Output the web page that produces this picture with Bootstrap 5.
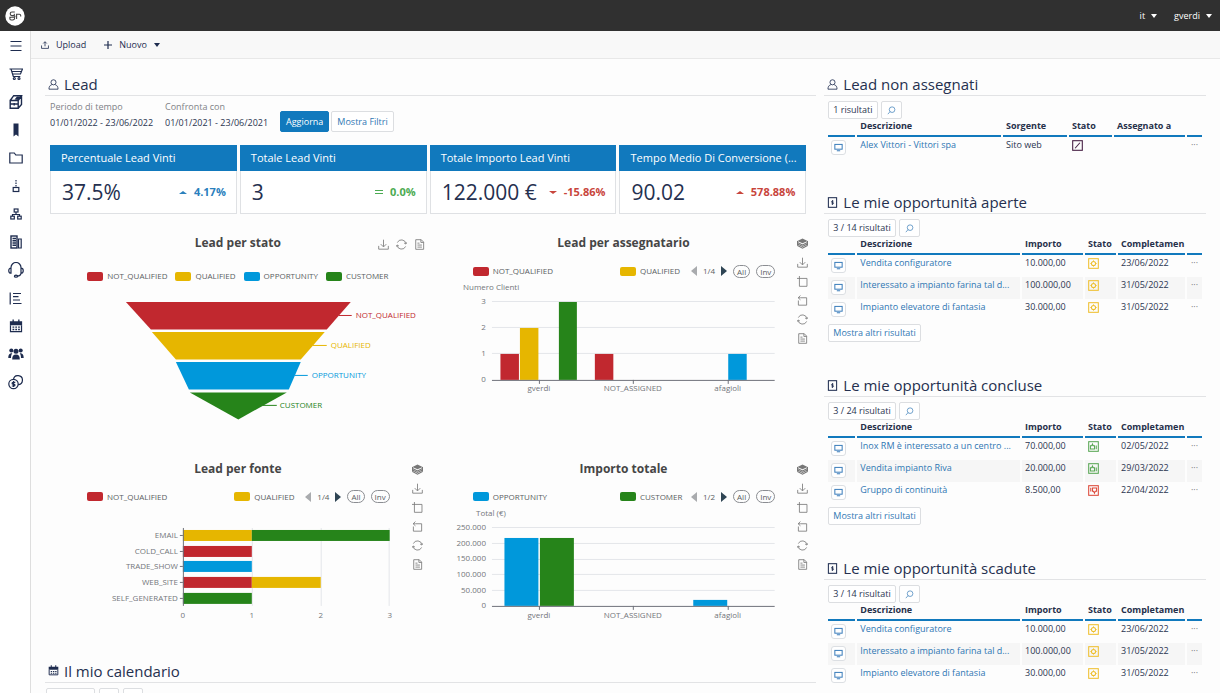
<!DOCTYPE html>
<html lang="it">
<head>
<meta charset="utf-8">
<meta name="viewport" content="width=device-width, initial-scale=1">
<title>Dashboard CRM</title>
<link href="https://cdn.jsdelivr.net/npm/bootstrap@5.3.0/dist/css/bootstrap.min.css" rel="stylesheet">
<style>
:root{--navy:#1e2c4f;--brand:#1179bd;--line:#e2e3e5;--red:#c1282f;--yellow:#e6b600;--blue:#0098db;--green:#26841a}
body{font-family:"Open Sans","Noto Sans",sans-serif;font-size:9px;line-height:14px;color:#2b3550;background:#fdfdfd}
.shell{scrollbar-width:none}
.shell::-webkit-scrollbar{display:none}
svg{display:block;flex:none}
.ic{fill:none;stroke:currentColor;stroke-width:1.2}
.ic .f,.f{fill:currentColor;stroke:none}
.topbar{background:#303030;height:31px;padding:0 8px 0 5px}
.topbar button,.actions button{background:none;border:0;padding:0;line-height:14px;display:flex;align-items:center}
.topbar button{color:#fff;gap:6px}
.topbar .users{gap:17px}
.tri{width:0;height:0;border:3px solid transparent;border-top:4px solid currentColor;border-bottom:0}
.tri.up{border:4px solid transparent;border-bottom:3px solid currentColor;border-top:0}
.tri.down{border:4px solid transparent;border-top:3px solid currentColor;border-bottom:0}
.rail{width:31px;border-right:1px solid #dedede;background:#fff;color:var(--navy);padding:1px 0 0 1px}
.rail a{height:28px;color:inherit;display:flex;align-items:center;justify-content:center}
.actions{height:28px;background:#f8f8f8;border-bottom:1px solid #e8e8e8;padding:0 10px;gap:18px}
.actions button{color:var(--navy);gap:7px}
.board{padding:15px 14px 0}
.sec-title{font-size:15px;line-height:20px;font-weight:400;color:#25304f;border-bottom:1px solid var(--line);margin:0;padding:0 0 1px 3px;gap:5px}
.sec-title svg{width:11px;height:11px;color:var(--navy)}
.section+.section{margin-top:33px}
.calendar{margin-top:34px}
.filters{gap:8px;padding:5px 5px 0;margin-bottom:13px}
.fld{width:107px;padding-bottom:2px}
.fld label{line-height:12px;color:#808287;display:block;margin-bottom:3px}
.fld input{border:0;background:none;padding:0;width:100%;height:14px;line-height:14px;color:#2b3550;display:block}
.filters .btn{height:21px;padding:0 5px;font-size:9px;line-height:17px;border-radius:2px}
.btn-brand,.btn-brand:hover{background:var(--brand);border-color:var(--brand);color:#fff}
.btn-soft,.btn-soft:hover{background:#fff;border:1px solid #dcdee1;color:#3178b4}
.filters .pair{gap:2px}
.kpis{display:grid;grid-template-columns:repeat(4,minmax(0,1fr));gap:3px;margin:0 10px 17px 5px}
.kpis .card{border:1px solid #dfe1e4;border-radius:0;background:#fff}
.kpis .card-header{background:var(--brand);color:#fff;font-size:11px;line-height:16px;padding:5px 4px 5px 11px;border:0;border-radius:0;margin:-1px -1px 0}
.kpis .card-body{padding:0 10px 0 11px;height:42px}
.kpi-num{font-size:21px;line-height:28px;color:#25304f}
.kpi-delta{font-size:11px;font-weight:700;gap:7px}
.t-blue{color:#2a80bd}.t-green{color:#4cab52}.t-red{color:#c8453c}
.chart{position:relative;font-size:8px;color:#5a5d63}
.chart h3{font-size:12px;line-height:18px;font-weight:700;color:#464646;margin:0;padding-top:3px;text-align:center}
.legend-row{margin:12px 41px 0 42px;height:14px}
.legend-row.centered{margin:17px 0 0;gap:8px}
.pager{gap:6px}
.key{display:flex;align-items:center;gap:4px}
.key::before{content:"";width:16px;height:9px;border-radius:2px;background:var(--c)}
.key.second{width:71px}
.pg{background:none;border:0;padding:0;width:6px;height:12px;display:flex;align-items:center}
.pill{background:none;border:1px solid #8b8d92;border-radius:7px;padding:0 3px;line-height:11px;font-size:8px;color:#5a5d63;height:13px}
.toolbox{position:absolute;top:7px;right:8px;display:flex;flex-direction:column;gap:8px}
.toolbox.flat{flex-direction:row;gap:7px;right:6px;top:8px}
.toolbox button{background:none;border:0;padding:0;color:#777}
.plot{width:100%;height:auto;font-size:8px;fill:#73767b}
.plot text{dominant-baseline:central}
.grid-line{stroke:#e4e6ea;stroke-width:1}
.axis{stroke:#6e7079;stroke-width:1}
.r{fill:var(--red)}.y{fill:var(--yellow)}.b{fill:var(--blue)}.g{fill:var(--green)}
.mid{text-anchor:middle}.end{text-anchor:end}
.results{margin:5px 4px 0;gap:3px}
.btn-mini,.btn-mini:hover{height:18px;font-size:9px;line-height:16px;padding:0 4px;border-radius:2px;border:1px solid #dcdee1;background:#fff;color:#2b3550}
.btn-mini.blue{color:#3178b4}
.results .btn-mini.blue{padding:0 5px}
.more{margin:3px 4px 1px}
.lst{table-layout:fixed;border-collapse:separate;border-spacing:2px 0;width:calc(100% - 4px);margin-left:2px}
.lst th{height:18px;line-height:14px;padding:0 0 2px 3px;border-bottom:2px solid var(--brand);font-weight:700;color:#26304a;white-space:nowrap;overflow:hidden}
.lst td{height:22px;padding:1px 0 0 3px;vertical-align:top;white-space:nowrap;overflow:hidden}
.lst td:first-child{padding-top:3px}
.lst tbody tr:nth-child(even) td{background:#f6f6f6}
.lst a{color:#2e76b3;text-decoration:none}
.lst button{background:#fff;border:1px solid #dcdfe3;border-radius:3px;width:15px;height:15px;padding:0;display:flex;align-items:center;justify-content:center;color:#3b7dbb}
.lst .dots{border:0;background:none;width:9px;height:13px;color:#777}
.lst td>.ic{margin-top:2px}
.c-btn{width:27px}.c-imp{width:61px}.c-sta{width:31px}.c-com{width:67px}.c-dot{width:15px}
.c-sor{width:64px}.c-st2{width:43px}.c-ass{width:71px}
.lst .ic{stroke-width:1}
.s-open{color:#eebf2d}.s-won{color:#58a653}.s-lost{color:#dd4838}.s-new{color:#4a2347}
.calbtns{margin:5px 1px 0;gap:4px}
.calbtns .btn-mini{width:20px}
.calbtns .btn-mini:first-child{width:49px}
</style>
</head>
<body class="vh-100 d-flex flex-column overflow-hidden">

<svg width="0" height="0" class="position-absolute" aria-hidden="true">
<symbol id="i-user" viewBox="0 0 16 16"><circle cx="8" cy="4.800" r="3.700"/><path d="M5.500 8.300C3 9 1.400 11 1.400 14.800h13.200C14.600 11 13 9 10.500 8.300"/></symbol>
<symbol id="i-bill" viewBox="0 0 16 16"><rect x="2" y="1" width="12" height="14" stroke-width="1.500"/><path d="M9.500 6H7.500a1 1 0 0 0 0 2h1a1 1 0 0 1 0 2H6.500M8 4.500v7"/></symbol>
<symbol id="i-cal" viewBox="0 0 16 16"><path class="f" d="M1 2.500h3V.5h1.500v2h5v-2H12v2h3V7H1z"/><path d="M1.700 7v7.300h12.600V7" stroke-width="1.400"/><path d="M4 9.300h2M7.200 9.300h2M10.400 9.300h2M4 12h2M7.200 12h2M10.400 12h2" stroke-width="1.500"/></symbol>
<symbol id="i-dl" viewBox="0 0 16 16"><path d="M8 1v10M4 7.500l4 4 4-4M1 10v4.800h14V10"/></symbol>
<symbol id="i-sync" viewBox="0 0 16 16"><path d="M1.600 9.200A6.500 6.500 0 0 0 14 10.800M14.400 6.800A6.500 6.500 0 0 0 2 5.200M.3 11.200l1.300-2.500 2.500 1.300M15.700 4.800l-1.300 2.500-2.500-1.300"/></symbol>
<symbol id="i-doc" viewBox="0 0 16 16"><path d="M2.500 1h8l3.500 3.500V15H2.500zM10 1v4h4M5 6h3M5 8.800h6.500M5 11.800h6.500"/></symbol>
<symbol id="i-stack" viewBox="0 0 16 16"><path class="f" d="M8 .8l7.500 3.400L8 7.700.5 4.200z"/><path d="M.8 6.500L8 10l7.200-3.500M.8 8.800L8 12.200l7.200-3.400M.8 11L8 14.800l7.200-3.800M.8 4.500V11M15.200 4.500V11" stroke-width="1.600"/></symbol>
<symbol id="i-zoom" viewBox="0 0 16 16"><path d="M0 3.500h14.500V15H3.500V0"/></symbol>
<symbol id="i-back" viewBox="0 0 16 16"><path d="M5 4h9v10.800H2V8M5 .8L1.700 4 5 7M1.700 4H5"/></symbol>
<symbol id="i-pc" viewBox="0 0 16 16"><rect x="1.500" y="2.500" width="13" height="8.500" stroke-width="1.800"/><path d="M5 13.800h6" stroke-width="1.800"/></symbol>
<symbol id="i-find" viewBox="0 0 16 16"><circle cx="9" cy="6.500" r="5"/><path d="M5.400 10L1.500 14.500"/></symbol>
<symbol id="i-sun" viewBox="0 0 16 16"><rect x="1" y="1" width="14" height="14" stroke-width="1.500"/><circle cx="8" cy="8" r="3" stroke-width="1.500"/><path d="M8 3v1M8 12v1M3 8h1M12 8h1" stroke-width="1.300"/></symbol>
<symbol id="i-up" viewBox="0 0 16 16"><rect x="1" y="1" width="14" height="14" stroke-width="1.500"/><path d="M3.500 7h2l1-2.500 1 2.500h2v4.500h-6zM12 6.500v5.500" stroke-width="1.500"/></symbol>
<symbol id="i-down" viewBox="0 0 16 16"><rect x="1" y="1" width="14" height="14" stroke-width="1.500"/><path d="M4 4v5.500M6.500 4.500h6V9h-2L9.500 12 8 9H6.500z" stroke-width="1.500"/></symbol>
<symbol id="i-pen" viewBox="0 0 16 16"><rect x="1" y="1" width="14" height="14" stroke-width="1.600"/><path d="M4.500 12l7-8" stroke-width="1.600"/></symbol>
<symbol id="i-prev" viewBox="0 0 6 10"><path fill="#a9abae" stroke="none" d="M6 0v10L0 5z"/></symbol>
<symbol id="i-next" viewBox="0 0 6 10"><path fill="#2f4554" stroke="none" d="M0 0v10l6-5z"/></symbol>
</svg>

<header class="topbar d-flex align-items-center justify-content-between flex-shrink-0">
<a href="#" aria-label="Home"><svg width="20" height="20" viewBox="0 0 20 20"><circle cx="10" cy="10" r="9.700" fill="#fff"/><g fill="none" stroke="#444" stroke-width="1.100"><path d="M9.800 6H7a1.800 1.800 0 0 0 0 3.600h2.300V7.800M4.300 11.200h4.500a1.500 1.500 0 0 0 1.300-1.500M9.600 11.200v1a1.800 1.800 0 0 1-1.800 1.800H6.200a1.400 1.400 0 0 1 0-2.800M11.600 13V8.300h2.800a1.300 1.300 0 0 1 1.300 1.300v.8"/></g></svg></a>
<div class="users d-flex">
<button type="button">it <span class="tri"></span></button>
<button type="button">gverdi <span class="tri"></span></button>
</div>
</header>

<div class="d-flex flex-grow-1 overflow-hidden">
<nav class="rail flex-shrink-0" aria-label="Moduli">
<a href="#" aria-label="Menu"><svg class="ic" width="14" height="14" viewBox="0 0 14 14"><path d="M1.500 2.500h11M1.500 7h11M1.500 11.500h11"/></svg></a>
<a href="#" aria-label="Vendite"><svg class="ic" width="14" height="14" viewBox="0 0 14 14"><path d="M.5 2h13l-2 5H3.800M2 2l2.300 7.500h7M3 4.500h9"/><circle cx="5.300" cy="11.500" r="1"/><circle cx="10" cy="11.500" r="1"/></svg></a>
<a href="#" aria-label="Prodotti"><svg class="ic" width="14" height="16" viewBox="0 0 14 16"><path d="M1.200 6.500h8v7.800h-8zM1.200 6.500l3.500-4.800h7.800L9.200 6.500M12.500 1.700v8.800l-3.300 3.800M1.200 10h8M5.200 9v2.500" stroke-width="1.400"/><path class="f" d="M5.500 5.500L8 2.500h4L9.500 6z"/></svg></a>
<a href="#" aria-label="Preferiti"><svg class="ic" width="6" height="14" viewBox="0 0 6 14"><path class="f" d="M.5.500h5v13L3 11.500l-2.500 2z"/></svg></a>
<a href="#" aria-label="Documenti"><svg class="ic" width="14" height="12" viewBox="0 0 14 12"><path d="M.8 11V1h4.500l1.500 2h6.400v8z"/></svg></a>
<a href="#" aria-label="Attività"><svg class="ic" width="8" height="14" viewBox="0 0 8 14"><path d="M4 1v8" stroke-dasharray="1.500 1"/><rect x="1.200" y="8.500" width="5.600" height="4"/></svg></a>
<a href="#" aria-label="Organizzazione"><svg class="ic" width="12" height="12" viewBox="0 0 12 12"><rect x="4.200" y="1" width="3.800" height="3"/><path d="M6 4v2.500M2.500 8V6.500h7V8"/><rect x=".8" y="8.200" width="3.500" height="2.800"/><rect x="7.700" y="8.200" width="3.500" height="2.800"/></svg></a>
<a href="#" aria-label="Aziende"><svg class="ic" width="12" height="14" viewBox="0 0 12 14"><rect x="1" y="1" width="6" height="12" stroke-width="1.400"/><path d="M2.500 3.500h3.500M2.500 5.800h3.500M2.500 8h3.500M2.500 10.300h3.500" stroke-width="1.400"/><path d="M8.500 4h2.700v9H8.500z"/></svg></a>
<a href="#" aria-label="Assistenza"><svg class="ic" width="16" height="16" viewBox="0 0 16 16"><path d="M3 7V5.500a5 5 0 0 1 10 0V7M3 6.200c-3 0-3 5 0 5zM13 6.200c3 0 3 5 0 5zM13 11c0 2-1.500 3-4 3.200"/><ellipse cx="8" cy="14.200" rx="1.600" ry="1"/></svg></a>
<a href="#" aria-label="Report"><svg class="ic" width="13" height="13" viewBox="0 0 13 13"><path d="M1.200.5v12M4 1.500h8M4 4.700h5.500M4 8h7M4 11.500h8.500"/></svg></a>
<a href="#" aria-label="Calendario"><svg class="ic" width="14" height="14"><use href="#i-cal"/></svg></a>
<a href="#" aria-label="Gruppi"><svg width="16" height="12" viewBox="0 0 16 12"><g class="f"><circle cx="8" cy="3.200" r="2.500"/><circle cx="3.300" cy="2.500" r="2"/><circle cx="12.700" cy="2.500" r="2"/><path d="M4.200 11.500c0-3.500 1-5 3.800-5s3.800 1.500 3.800 5zM.3 10c0-3 .8-4.800 4-4.800C3.300 6.500 3 8 3 10zM15.700 10c0-3-.8-4.800-4-4.800C12.700 6.500 13 8 13 10z"/></g></svg></a>
<a href="#" aria-label="Costi"><svg class="ic" width="15" height="15" viewBox="0 0 15 15"><circle cx="5.500" cy="9" r="4.700"/><path d="M5.500 4.300a4.500 4.500 0 1 1 4.600 5.300M7.300 7.300H5a.9.900 0 0 0 0 1.800h1a.9.900 0 0 1 0 1.900H3.800M5.500 6v6"/></svg></a>
</nav>

<div class="d-flex flex-column flex-grow-1 overflow-hidden">
<div class="actions d-flex align-items-center flex-shrink-0">
<button type="button"><svg class="ic" width="8" height="8" viewBox="0 0 9 9"><path d="M4.500 6V1M2.500 2.800l2-2 2 2M.6 5v3.300h7.800V5" stroke-width=".9"/></svg>Upload</button>
<button type="button"><svg class="ic" width="8" height="8" viewBox="0 0 8 8"><path d="M4 0v8M0 4h8"/></svg>Nuovo <span class="tri"></span></button>
</div>

<main class="board shell flex-grow-1 overflow-auto">
<div class="row gx-2">
<div class="col-8">
<h2 class="sec-title d-flex align-items-center"><svg class="ic"><use href="#i-user"/></svg>Lead</h2>
<form class="filters d-flex align-items-end">
<div class="fld"><label for="periodo">Periodo di tempo</label><input id="periodo" type="text" value="01/01/2022 - 23/06/2022"></div>
<div class="fld"><label for="confronta">Confronta con</label><input id="confronta" type="text" value="01/01/2021 - 23/06/2021"></div>
<div class="pair d-flex"><button type="button" class="btn btn-brand">Aggiorna</button><button type="button" class="btn btn-soft">Mostra Filtri</button></div>
</form>

<div class="kpis">
<div class="card"><div class="card-header text-truncate">Percentuale Lead Vinti</div><div class="card-body d-flex align-items-center justify-content-between"><span class="kpi-num">37.5%</span><span class="kpi-delta t-blue d-flex align-items-center"><i class="tri up"></i>4.17%</span></div></div>
<div class="card"><div class="card-header text-truncate">Totale Lead Vinti</div><div class="card-body d-flex align-items-center justify-content-between"><span class="kpi-num">3</span><span class="kpi-delta t-green d-flex align-items-center"><svg class="ic" width="8" height="6" viewBox="0 0 8 6"><path d="M0 1.500h8M0 4.500h8"/></svg>0.0%</span></div></div>
<div class="card"><div class="card-header text-truncate">Totale Importo Lead Vinti</div><div class="card-body d-flex align-items-center justify-content-between"><span class="kpi-num">122.000 €</span><span class="kpi-delta t-red d-flex align-items-center"><i class="tri down"></i>-15.86%</span></div></div>
<div class="card"><div class="card-header text-truncate">Tempo Medio Di Conversione (...</div><div class="card-body d-flex align-items-center justify-content-between"><span class="kpi-num">90.02</span><span class="kpi-delta t-red d-flex align-items-center"><i class="tri up"></i>578.88%</span></div></div>
</div>

<div class="row g-0">
<div class="col-6"><section class="chart">
<h3>Lead per stato</h3>
<div class="toolbox flat">
<button type="button" aria-label="Scarica"><svg class="ic" width="11" height="11"><use href="#i-dl"/></svg></button>
<button type="button" aria-label="Aggiorna"><svg class="ic" width="11" height="11"><use href="#i-sync"/></svg></button>
<button type="button" aria-label="Dati"><svg class="ic" width="11" height="11"><use href="#i-doc"/></svg></button>
</div>
<div class="legend-row centered d-flex justify-content-center">
<span class="key" style="--c:var(--red)">NOT_QUALIFIED</span><span class="key" style="--c:var(--yellow)">QUALIFIED</span><span class="key" style="--c:var(--blue)">OPPORTUNITY</span><span class="key" style="--c:var(--green)">CUSTOMER</span>
</div>
<svg class="plot" viewBox="0 0 386 174">
<path class="r" d="M81 19H306L282 46.500H106z"/><path class="y" d="M107 49H280L256 76.500H131z"/><path class="b" d="M131 79H256L244 106.500H144z"/><path class="g" d="M145 109.500H242L193.500 136.500z"/>
<path stroke="#c1282f" d="M294 32.500h13"/><path stroke="#e6b600" d="M268 62.500h14"/><path stroke="#0098db" d="M250 92.500h13"/><path stroke="#26841a" d="M218 122.500h14"/>
<text class="r" x="311" y="32">NOT_QUALIFIED</text><text class="y" x="286" y="62">QUALIFIED</text><text class="b" x="267" y="92">OPPORTUNITY</text><text class="g" x="235" y="122">CUSTOMER</text>
</svg>
</section></div>

<div class="col-6"><section class="chart">
<h3>Lead per assegnatario</h3>
<div class="toolbox">
<button type="button" aria-label="Impila"><svg class="ic" width="11" height="11"><use href="#i-stack"/></svg></button>
<button type="button" aria-label="Scarica"><svg class="ic" width="11" height="11"><use href="#i-dl"/></svg></button>
<button type="button" aria-label="Zoom"><svg class="ic" width="11" height="11"><use href="#i-zoom"/></svg></button>
<button type="button" aria-label="Annulla zoom"><svg class="ic" width="11" height="11"><use href="#i-back"/></svg></button>
<button type="button" aria-label="Aggiorna"><svg class="ic" width="11" height="11"><use href="#i-sync"/></svg></button>
<button type="button" aria-label="Dati"><svg class="ic" width="11" height="11"><use href="#i-doc"/></svg></button>
</div>
<div class="legend-row d-flex align-items-center">
<span class="key me-auto" style="--c:var(--red)">NOT_QUALIFIED</span><span class="key second" style="--c:var(--yellow)">QUALIFIED</span>
<div class="pager d-flex align-items-center"><button type="button" class="pg" aria-label="Precedente"><svg width="6" height="10"><use href="#i-prev"/></svg></button><span>1/4</span><button type="button" class="pg" aria-label="Successivo"><svg width="6" height="10"><use href="#i-next"/></svg></button><button type="button" class="pill">All</button><button type="button" class="pill">Inv</button></div>
</div>
<svg class="plot" viewBox="0 0 386 179">
<path class="grid-line" d="M61 23.500H344M61 49.500H344M61 75.500H344"/>
<rect class="r" x="69.500" y="76" width="18.500" height="26"/><rect class="y" x="89" y="50" width="18.500" height="52"/><rect class="g" x="128" y="24" width="18" height="78"/><rect class="r" x="164" y="76" width="18.500" height="26"/><rect class="b" x="297.500" y="76" width="18.500" height="26"/>
<path class="axis" fill="none" d="M61 102.500H344M108.500 102v4M202.500 102v4M297.500 102v4"/>
<text x="32" y="9">Numero Clienti</text>
<g class="end"><text x="55" y="23">3</text><text x="55" y="49">2</text><text x="55" y="75">1</text><text x="55" y="101">0</text></g>
<g class="mid"><text x="108" y="110">gverdi</text><text x="202" y="110">NOT_ASSIGNED</text><text x="297" y="110">afagioli</text></g>
</svg>
</section></div>

<div class="col-6"><section class="chart">
<h3>Lead per fonte</h3>
<div class="toolbox">
<button type="button" aria-label="Impila"><svg class="ic" width="11" height="11"><use href="#i-stack"/></svg></button>
<button type="button" aria-label="Scarica"><svg class="ic" width="11" height="11"><use href="#i-dl"/></svg></button>
<button type="button" aria-label="Zoom"><svg class="ic" width="11" height="11"><use href="#i-zoom"/></svg></button>
<button type="button" aria-label="Annulla zoom"><svg class="ic" width="11" height="11"><use href="#i-back"/></svg></button>
<button type="button" aria-label="Aggiorna"><svg class="ic" width="11" height="11"><use href="#i-sync"/></svg></button>
<button type="button" aria-label="Dati"><svg class="ic" width="11" height="11"><use href="#i-doc"/></svg></button>
</div>
<div class="legend-row d-flex align-items-center">
<span class="key me-auto" style="--c:var(--red)">NOT_QUALIFIED</span><span class="key second" style="--c:var(--yellow)">QUALIFIED</span>
<div class="pager d-flex align-items-center"><button type="button" class="pg" aria-label="Precedente"><svg width="6" height="10"><use href="#i-prev"/></svg></button><span>1/4</span><button type="button" class="pg" aria-label="Successivo"><svg width="6" height="10"><use href="#i-next"/></svg></button><button type="button" class="pill">All</button><button type="button" class="pill">Inv</button></div>
</div>
<svg class="plot" viewBox="0 0 386 123">
<path class="grid-line" d="M207.500 24v78M276.500 24v78M344.500 24v78"/>
<rect class="y" x="138" y="26" width="69" height="11"/><rect class="g" x="207" y="26" width="138" height="11"/><rect class="r" x="138" y="42" width="69" height="11"/><rect class="b" x="138" y="57" width="69" height="11"/><rect class="r" x="138" y="73" width="69" height="11"/><rect class="y" x="207" y="73" width="69" height="11"/><rect class="g" x="138" y="89" width="69" height="11"/>
<path class="axis" fill="none" d="M138.500 24v78M135 31.500h3M135 47.500h3M135 62.500h3M135 78.500h3M135 94.500h3"/>
<g class="end"><text x="133" y="31">EMAIL</text><text x="133" y="47">COLD_CALL</text><text x="133" y="62">TRADE_SHOW</text><text x="133" y="78">WEB_SITE</text><text x="133" y="94">SELF_GENERATED</text></g>
<g class="mid"><text x="138" y="111">0</text><text x="207" y="111">1</text><text x="276" y="111">2</text><text x="345" y="111">3</text></g>
</svg>
</section></div>

<div class="col-6"><section class="chart">
<h3>Importo totale</h3>
<div class="toolbox">
<button type="button" aria-label="Impila"><svg class="ic" width="11" height="11"><use href="#i-stack"/></svg></button>
<button type="button" aria-label="Scarica"><svg class="ic" width="11" height="11"><use href="#i-dl"/></svg></button>
<button type="button" aria-label="Zoom"><svg class="ic" width="11" height="11"><use href="#i-zoom"/></svg></button>
<button type="button" aria-label="Annulla zoom"><svg class="ic" width="11" height="11"><use href="#i-back"/></svg></button>
<button type="button" aria-label="Aggiorna"><svg class="ic" width="11" height="11"><use href="#i-sync"/></svg></button>
<button type="button" aria-label="Dati"><svg class="ic" width="11" height="11"><use href="#i-doc"/></svg></button>
</div>
<div class="legend-row d-flex align-items-center">
<span class="key me-auto" style="--c:var(--blue)">OPPORTUNITY</span><span class="key second" style="--c:var(--green)">CUSTOMER</span>
<div class="pager d-flex align-items-center"><button type="button" class="pg" aria-label="Precedente"><svg width="6" height="10"><use href="#i-prev"/></svg></button><span>1/2</span><button type="button" class="pg" aria-label="Successivo"><svg width="6" height="10"><use href="#i-next"/></svg></button><button type="button" class="pill">All</button><button type="button" class="pill">Inv</button></div>
</div>
<svg class="plot" viewBox="0 0 386 123">
<path class="grid-line" d="M61 23.500H344M61 39.500H344M61 55.500H344M61 70.500H344M61 86.500H344"/>
<rect class="b" x="73.500" y="34" width="34" height="68"/><rect class="g" x="109" y="34" width="34" height="68"/><rect class="b" x="262.500" y="96" width="34" height="6"/>
<path class="axis" fill="none" d="M61 102.500H344M108.500 102v4M202.500 102v4M297.500 102v4"/>
<text x="45" y="9">Total (€)</text>
<g class="end"><text x="55" y="23">250.000</text><text x="55" y="39">200.000</text><text x="55" y="54">150.000</text><text x="55" y="70">100.000</text><text x="55" y="86">50.000</text><text x="55" y="101">0</text></g>
<g class="mid"><text x="108" y="111">gverdi</text><text x="202" y="111">NOT_ASSIGNED</text><text x="297" y="111">afagioli</text></g>
</svg>
</section></div>
</div>

<section class="calendar">
<h2 class="sec-title d-flex align-items-center"><svg class="ic"><use href="#i-cal"/></svg>Il mio calendario</h2>
<div class="calbtns d-flex"><button type="button" class="btn-mini" aria-label="Oggi"></button><button type="button" class="btn-mini" aria-label="Indietro"></button><button type="button" class="btn-mini" aria-label="Avanti"></button></div>
</section>
</div>

<div class="col-4">
<section class="section">
<h2 class="sec-title d-flex align-items-center"><svg class="ic"><use href="#i-user"/></svg>Lead non assegnati</h2>
<div class="results d-flex"><button type="button" class="btn-mini">1 risultati</button><button type="button" class="btn-mini blue" aria-label="Cerca"><svg class="ic" width="9" height="9"><use href="#i-find"/></svg></button></div>
<table class="lst">
<thead><tr><th class="c-btn"></th><th>Descrizione</th><th class="c-sor">Sorgente</th><th class="c-st2">Stato</th><th class="c-ass">Assegnato a</th><th class="c-dot"></th></tr></thead>
<tbody><tr><td><button type="button" aria-label="Apri"><svg class="ic" width="9" height="9"><use href="#i-pc"/></svg></button></td><td><a href="#">Alex Vittori - Vittori spa</a></td><td>Sito web</td><td class="s-new"><svg class="ic" width="11" height="11"><use href="#i-pen"/></svg></td><td></td><td><button type="button" class="dots" aria-label="Altro">···</button></td></tr></tbody>
</table>
</section>

<section class="section">
<h2 class="sec-title d-flex align-items-center"><svg class="ic"><use href="#i-bill"/></svg>Le mie opportunità aperte</h2>
<div class="results d-flex"><button type="button" class="btn-mini">3 / 14 risultati</button><button type="button" class="btn-mini blue" aria-label="Cerca"><svg class="ic" width="9" height="9"><use href="#i-find"/></svg></button></div>
<table class="lst">
<thead><tr><th class="c-btn"></th><th>Descrizione</th><th class="c-imp">Importo</th><th class="c-sta">Stato</th><th class="c-com">Completamen</th><th class="c-dot"></th></tr></thead>
<tbody>
<tr><td><button type="button" aria-label="Apri"><svg class="ic" width="9" height="9"><use href="#i-pc"/></svg></button></td><td><a href="#">Vendita configuratore</a></td><td>10.000,00</td><td class="s-open"><svg class="ic" width="11" height="11"><use href="#i-sun"/></svg></td><td>23/06/2022</td><td><button type="button" class="dots" aria-label="Altro">···</button></td></tr>
<tr><td><button type="button" aria-label="Apri"><svg class="ic" width="9" height="9"><use href="#i-pc"/></svg></button></td><td><a href="#">Interessato a impianto farina tal d...</a></td><td>100.000,00</td><td class="s-open"><svg class="ic" width="11" height="11"><use href="#i-sun"/></svg></td><td>31/05/2022</td><td><button type="button" class="dots" aria-label="Altro">···</button></td></tr>
<tr><td><button type="button" aria-label="Apri"><svg class="ic" width="9" height="9"><use href="#i-pc"/></svg></button></td><td><a href="#">Impianto elevatore di fantasia</a></td><td>30.000,00</td><td class="s-open"><svg class="ic" width="11" height="11"><use href="#i-sun"/></svg></td><td>31/05/2022</td><td><button type="button" class="dots" aria-label="Altro">···</button></td></tr>
</tbody></table>
<div class="more d-flex"><button type="button" class="btn-mini blue">Mostra altri risultati</button></div>
</section>

<section class="section">
<h2 class="sec-title d-flex align-items-center"><svg class="ic"><use href="#i-bill"/></svg>Le mie opportunità concluse</h2>
<div class="results d-flex"><button type="button" class="btn-mini">3 / 24 risultati</button><button type="button" class="btn-mini blue" aria-label="Cerca"><svg class="ic" width="9" height="9"><use href="#i-find"/></svg></button></div>
<table class="lst">
<thead><tr><th class="c-btn"></th><th>Descrizione</th><th class="c-imp">Importo</th><th class="c-sta">Stato</th><th class="c-com">Completamen</th><th class="c-dot"></th></tr></thead>
<tbody>
<tr><td><button type="button" aria-label="Apri"><svg class="ic" width="9" height="9"><use href="#i-pc"/></svg></button></td><td><a href="#">Inox RM è interessato a un centro ...</a></td><td>70.000,00</td><td class="s-won"><svg class="ic" width="11" height="11"><use href="#i-up"/></svg></td><td>02/05/2022</td><td><button type="button" class="dots" aria-label="Altro">···</button></td></tr>
<tr><td><button type="button" aria-label="Apri"><svg class="ic" width="9" height="9"><use href="#i-pc"/></svg></button></td><td><a href="#">Vendita impianto Riva</a></td><td>20.000,00</td><td class="s-won"><svg class="ic" width="11" height="11"><use href="#i-up"/></svg></td><td>29/03/2022</td><td><button type="button" class="dots" aria-label="Altro">···</button></td></tr>
<tr><td><button type="button" aria-label="Apri"><svg class="ic" width="9" height="9"><use href="#i-pc"/></svg></button></td><td><a href="#">Gruppo di continuità</a></td><td>8.500,00</td><td class="s-lost"><svg class="ic" width="11" height="11"><use href="#i-down"/></svg></td><td>22/04/2022</td><td><button type="button" class="dots" aria-label="Altro">···</button></td></tr>
</tbody></table>
<div class="more d-flex"><button type="button" class="btn-mini blue">Mostra altri risultati</button></div>
</section>

<section class="section">
<h2 class="sec-title d-flex align-items-center"><svg class="ic"><use href="#i-bill"/></svg>Le mie opportunità scadute</h2>
<div class="results d-flex"><button type="button" class="btn-mini">3 / 14 risultati</button><button type="button" class="btn-mini blue" aria-label="Cerca"><svg class="ic" width="9" height="9"><use href="#i-find"/></svg></button></div>
<table class="lst">
<thead><tr><th class="c-btn"></th><th>Descrizione</th><th class="c-imp">Importo</th><th class="c-sta">Stato</th><th class="c-com">Completamen</th><th class="c-dot"></th></tr></thead>
<tbody>
<tr><td><button type="button" aria-label="Apri"><svg class="ic" width="9" height="9"><use href="#i-pc"/></svg></button></td><td><a href="#">Vendita configuratore</a></td><td>10.000,00</td><td class="s-open"><svg class="ic" width="11" height="11"><use href="#i-sun"/></svg></td><td>23/06/2022</td><td><button type="button" class="dots" aria-label="Altro">···</button></td></tr>
<tr><td><button type="button" aria-label="Apri"><svg class="ic" width="9" height="9"><use href="#i-pc"/></svg></button></td><td><a href="#">Interessato a impianto farina tal d...</a></td><td>100.000,00</td><td class="s-open"><svg class="ic" width="11" height="11"><use href="#i-sun"/></svg></td><td>31/05/2022</td><td><button type="button" class="dots" aria-label="Altro">···</button></td></tr>
<tr><td><button type="button" aria-label="Apri"><svg class="ic" width="9" height="9"><use href="#i-pc"/></svg></button></td><td><a href="#">Impianto elevatore di fantasia</a></td><td>30.000,00</td><td class="s-open"><svg class="ic" width="11" height="11"><use href="#i-sun"/></svg></td><td>31/05/2022</td><td><button type="button" class="dots" aria-label="Altro">···</button></td></tr>
</tbody></table>
</section>
</div>
</div>
</main>
</div>
</div>
<script src="https://cdn.jsdelivr.net/npm/bootstrap@5.3.0/dist/js/bootstrap.bundle.min.js"></script>
</body>
</html>
